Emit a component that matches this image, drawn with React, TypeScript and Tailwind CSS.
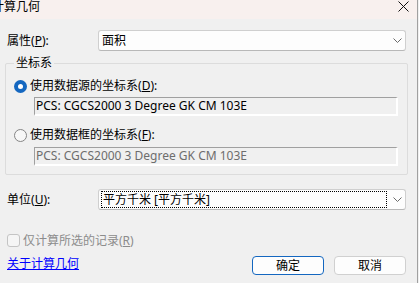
import React from 'react'

function Combo({ children, focus }: { children: React.ReactNode; focus?: boolean }) {
  return (
    <div className="w-[308px] h-[21px] bg-[#fdfdfd] border border-[#cfcfcf] border-b-[#b8b8b8] rounded-[3px] flex items-center pl-[2px] pr-[3px]">
      <div className="flex-1 h-[17px] flex items-center">
        {focus ? (
          <span className="h-[17px] w-[286px] border border-dotted border-black flex items-center pl-[1px] leading-none">{children}</span>
        ) : (
          <span className="pl-[1px] leading-none">{children}</span>
        )}
      </div>
      <svg width="9" height="5" viewBox="0 0 9 5">
        <path d="M0.5 0.5 L4.5 4.5 L8.5 0.5" fill="none" stroke="#6a6a6a" strokeWidth="1" />
      </svg>
    </div>
  )
}

function Field({ text, disabled }: { text: string; disabled?: boolean }) {
  return (
    <div className={`ml-[20px] w-[364px] h-[19px] bg-[#f0f0f0] border-t border-l border-[#a0a0a0] border-r-2 border-b-2 border-r-white border-b-white flex items-center pl-[1px] leading-none ${disabled ? 'text-[#6d6d6d]' : 'text-black'}`}>
      {text}
    </div>
  )
}

function Key({ k }: { k: string }) {
  return <>(<span className="underline underline-offset-1">{k}</span>):</>
}

export default function App() {
  return (
    <div className="w-[419px] h-[283px] overflow-hidden bg-[#f0f0f0] font-['Noto_Sans','Noto_Sans_CJK_SC',sans-serif] text-[12px] text-black">
      <div className="w-[418px] h-[283px] border-r border-[#a0a0a0]">
        <div className="h-[19px] bg-[#f8f0ee] flex items-start justify-between">
          <span className="-ml-[8px] leading-[13px] text-[12px]">计算几何</span>
          <svg width="11" height="11" viewBox="0 0 11 11" className="mt-[1px] mr-[8px]">
            <path d="M0.5 0.5 L10.5 10.5 M10.5 0.5 L0.5 10.5" stroke="#111" strokeWidth="1" />
          </svg>
        </div>

        <div className="pl-[7px]">
          <div className="mt-[11px] h-[21px] flex items-center">
            <span className="w-[91px] leading-none">属性<Key k="P" /></span>
            <Combo>面积</Combo>
          </div>

          <div className="relative mt-[12px] -ml-[2px] w-[403px] h-[112px] border border-[#dcdcdc] rounded-[2px] pl-[8px]">
            <span className="absolute left-[8px] -top-[8px] px-[2px] bg-[#f0f0f0] leading-[14px]">坐标系</span>

            <div className="mt-[15px] h-[14px] flex items-center gap-[3px]">
              <span className="w-[13px] h-[13px] rounded-full bg-[#1467c0] flex items-center justify-center">
                <span className="w-[5px] h-[5px] rounded-full bg-white" />
              </span>
              <span className="leading-none">使用数据源的坐标系<Key k="D" /></span>
            </div>
            <div className="mt-[4px]">
              <Field text="PCS: CGCS2000 3 Degree GK CM 103E" />
            </div>

            <div className="mt-[12px] h-[14px] flex items-center gap-[3px]">
              <span className="w-[13px] h-[13px] rounded-full border border-[#858585] bg-[#f7f7f7]" />
              <span className="leading-none">使用数据框的坐标系<Key k="F" /></span>
            </div>
            <div className="mt-[5px]">
              <Field text="PCS: CGCS2000 3 Degree GK CM 103E" disabled />
            </div>
          </div>

          <div className="mt-[14px] h-[21px] flex items-center">
            <span className="w-[91px] leading-none">单位<Key k="U" /></span>
            <Combo focus>平方千米 [平方千米]</Combo>
          </div>

          <div className="mt-[24px] h-[13px] flex items-center gap-[3px] text-[#8c8c8c]">
            <span className="w-[13px] h-[13px] rounded-[3px] border border-[#c4c4c4] bg-[#f5f5f5]" />
            <span className="leading-none">仅计算所选的记录(<span className="underline underline-offset-1">R</span>)</span>
          </div>

          <div className="mt-[9px] h-[19px] flex items-center">
            <a className="text-[#0000ff] underline leading-none -mt-[3px]">关于计算几何</a>
            <div className="ml-auto mr-[11px] flex gap-[10px]">
              <button className="w-[72px] h-[19px] rounded-[4px] border border-[#1467c0] bg-[#fdfdfd] leading-none">确定</button>
              <button className="w-[72px] h-[19px] rounded-[4px] border border-[#d0d0d0] bg-[#fdfdfd] leading-none">取消</button>
            </div>
          </div>
        </div>
      </div>
    </div>
  )
}
